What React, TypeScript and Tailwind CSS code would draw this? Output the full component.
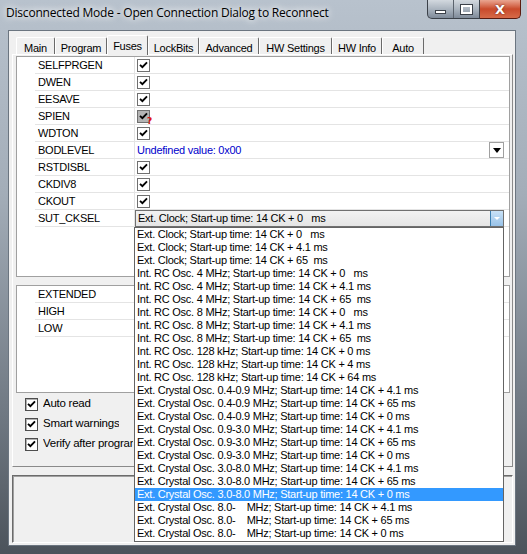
import React from "react"

const UI = "font-['Liberation_Sans',Arial,sans-serif] text-[11px] tracking-[-0.25px] text-black"

type Fuse = { name: string; kind: "check" | "grey" | "bod" | "combo" }

const fuses: Fuse[] = [
  { name: "SELFPRGEN", kind: "check" },
  { name: "DWEN", kind: "check" },
  { name: "EESAVE", kind: "check" },
  { name: "SPIEN", kind: "grey" },
  { name: "WDTON", kind: "check" },
  { name: "BODLEVEL", kind: "bod" },
  { name: "RSTDISBL", kind: "check" },
  { name: "CKDIV8", kind: "check" },
  { name: "CKOUT", kind: "check" },
  { name: "SUT_CKSEL", kind: "combo" },
]

const options = [
  "Ext. Clock; Start-up time: 14 CK + 0   ms",
  "Ext. Clock; Start-up time: 14 CK + 4.1 ms",
  "Ext. Clock; Start-up time: 14 CK + 65  ms",
  "Int. RC Osc. 4 MHz; Start-up time: 14 CK + 0   ms",
  "Int. RC Osc. 4 MHz; Start-up time: 14 CK + 4.1 ms",
  "Int. RC Osc. 4 MHz; Start-up time: 14 CK + 65  ms",
  "Int. RC Osc. 8 MHz; Start-up time: 14 CK + 0   ms",
  "Int. RC Osc. 8 MHz; Start-up time: 14 CK + 4.1 ms",
  "Int. RC Osc. 8 MHz; Start-up time: 14 CK + 65  ms",
  "Int. RC Osc. 128 kHz; Start-up time: 14 CK + 0 ms",
  "Int. RC Osc. 128 kHz; Start-up time: 14 CK + 4 ms",
  "Int. RC Osc. 128 kHz; Start-up time: 14 CK + 64 ms",
  "Ext. Crystal Osc. 0.4-0.9 MHz; Start-up time: 14 CK + 4.1 ms",
  "Ext. Crystal Osc. 0.4-0.9 MHz; Start-up time: 14 CK + 65 ms",
  "Ext. Crystal Osc. 0.4-0.9 MHz; Start-up time: 14 CK + 0 ms",
  "Ext. Crystal Osc. 0.9-3.0 MHz; Start-up time: 14 CK + 4.1 ms",
  "Ext. Crystal Osc. 0.9-3.0 MHz; Start-up time: 14 CK + 65 ms",
  "Ext. Crystal Osc. 0.9-3.0 MHz; Start-up time: 14 CK + 0 ms",
  "Ext. Crystal Osc. 3.0-8.0 MHz; Start-up time: 14 CK + 4.1 ms",
  "Ext. Crystal Osc. 3.0-8.0 MHz; Start-up time: 14 CK + 65 ms",
  "Ext. Crystal Osc. 3.0-8.0 MHz; Start-up time: 14 CK + 0 ms",
  "Ext. Crystal Osc. 8.0-    MHz; Start-up time: 14 CK + 4.1 ms",
  "Ext. Crystal Osc. 8.0-    MHz; Start-up time: 14 CK + 65 ms",
  "Ext. Crystal Osc. 8.0-    MHz; Start-up time: 14 CK + 0 ms",
]
const SELECTED = 20

const tabs = [
  { label: "Main", w: "w-[39px]" },
  { label: "Program", w: "w-[52px]" },
  { label: "Fuses", w: "w-[41px]", active: true },
  { label: "LockBits", w: "w-[51px]" },
  { label: "Advanced", w: "w-[60px]" },
  { label: "HW Settings", w: "w-[73px]" },
  { label: "HW Info", w: "w-[50px]" },
  { label: "Auto", w: "w-[42px]" },
]

function Tick() {
  return (
    <svg width="9" height="8" viewBox="0 0 9 8">
      <path d="M1 3.8 L3.4 6.2 L8 1.4" fill="none" stroke="#000" strokeWidth="1.9" />
    </svg>
  )
}

function GridCheck({ grey }: { grey?: boolean }) {
  return (
    <div
      className={`relative ml-[2px] w-[13px] h-[13px] border border-[#6f6f6f] flex items-center justify-center ${
        grey ? "bg-[#b4b4b4]" : "bg-white"
      }`}
    >
      <Tick />
      {grey && (
        <span className="absolute right-[-3px] bottom-[-4px] text-[9px] leading-[9px] font-bold text-[#e01010] font-['DejaVu_Sans',sans-serif]">
          ?
        </span>
      )}
    </div>
  )
}

function DropButton() {
  return (
    <div className="w-[15px] h-[16px] border border-[#a0a0a0] bg-white flex items-center justify-center">
      <div className="w-0 h-0 border-x-[4px] border-x-transparent border-t-[5px] border-t-black" />
    </div>
  )
}

function Combo() {
  return (
    <div className="flex-1 h-[17px] mt-[1px] flex border border-[#707070] bg-gradient-to-b from-[#f2f2f2] to-[#e5e5e5]">
      <div className="flex-1 pl-[2px] leading-[15px] whitespace-pre">{options[0]}</div>
      <div className="w-[13px] border-l border-[#3c7fb1] bg-gradient-to-b from-[#c9e2f7] to-[#98c2e8] flex items-center justify-center">
        <div className="w-0 h-0 border-x-[3px] border-x-transparent border-t-[3px] border-t-white" />
      </div>
    </div>
  )
}

function FuseRow({ fuse }: { fuse: Fuse }) {
  let value: React.ReactNode = null
  if (fuse.kind === "check") value = <GridCheck />
  if (fuse.kind === "grey") value = <GridCheck grey />
  if (fuse.kind === "bod")
    value = (
      <>
        <span className="flex-1 pl-[2px] text-[#0000cc]">Undefined value: 0x00</span>
        <DropButton />
      </>
    )
  if (fuse.kind === "combo") value = <Combo />

  return (
    <div className="flex h-[17px]">
      <div className="w-[18px] shrink-0" />
      <div className="w-[99px] shrink-0 border-b border-[#e4e4e4] pl-[3px] flex items-center">{fuse.name}</div>
      <div className="flex-1 border-b border-l border-[#e4e4e4] flex items-center pr-[5px]">{value}</div>
    </div>
  )
}

function PlainRow({ name }: { name: string }) {
  return (
    <div className="flex h-[17px]">
      <div className="w-[18px] shrink-0" />
      <div className="w-[99px] shrink-0 border-b border-[#e4e4e4] pl-[3px] flex items-center">{name}</div>
      <div className="flex-1 border-b border-l border-[#e4e4e4]" />
    </div>
  )
}

function OptionCheck({ label }: { label: string }) {
  return (
    <div className="h-[20px] flex items-center gap-[5px]">
      <div className="w-[13px] h-[13px] shrink-0 border border-[#4d4d4d] bg-white shadow-[inset_1px_1px_0_#b0b0b0] flex items-center justify-center">
        <Tick />
      </div>
      <span className="whitespace-nowrap overflow-hidden">{label}</span>
    </div>
  )
}

function TitleBar() {
  return (
    <div className="h-[30px] flex justify-between items-start">
      <div className="pl-[6px] pt-[4px] text-[12px] text-black font-['Open_Sans','Noto_Sans',sans-serif] tracking-[-0.2px] [text-shadow:0_0_6px_#fff,0_0_10px_#fff]">
        Disconnected Mode - Open Connection Dialog to Reconnect
      </div>
      <div className="flex mr-[6px]">
        <div className="flex h-[19px] border border-[#3b4149] border-t-0 rounded-bl-[5px] overflow-hidden bg-gradient-to-b from-[#d3d9df] via-[#aab4bf] to-[#7f8b99]">
          <div className="w-[26px] flex items-center justify-center border-r border-[#5b636d]">
            <div className="w-[11px] h-[4px] mt-[5px] bg-white border border-[#3b4149]" />
          </div>
          <div className="w-[25px] flex items-center justify-center">
            <div className="w-[11px] h-[9px] border-2 border-white outline outline-1 outline-[#3b4149]" />
          </div>
        </div>
        <div className="w-[41px] h-[19px] border border-[#5a1b10] border-t-0 border-l-0 rounded-br-[5px] bg-gradient-to-b from-[#e9a591] via-[#c94a2b] to-[#d76a48] flex items-center justify-center">
          <span className="text-white font-bold text-[13px] leading-[13px] font-['DejaVu_Sans',sans-serif] [text-shadow:0_0_2px_#5a1b10]">
            X
          </span>
        </div>
      </div>
    </div>
  )
}

export default function App() {
  return (
    <div
      className={`relative w-[527px] h-[554px] overflow-hidden flex flex-col bg-[linear-gradient(180deg,#b8c2cd_0%,#a3adb8_35%,#6f7882_75%,#4c535b_100%)] ${UI}`}
    >
      <TitleBar />

      <div className="pl-[8px]">
        <div className="w-[508px] h-[516px] bg-[#f0f0f0] border border-[#6b7580] flex flex-col">
          {/* tab strip */}
          <div className="h-[23px] flex items-end pl-[7px]">
            {tabs.map((t) =>
              t.active ? (
                <div
                  key={t.label}
                  className={`${t.w} h-[20px] -mb-[1px] relative z-10 bg-[#f0f0f0] border-t border-l border-white border-r border-r-[#6a6a6a] rounded-t-[2px] flex justify-center pt-[2px]`}
                >
                  {t.label}
                </div>
              ) : (
                <div
                  key={t.label}
                  className={`${t.w} h-[17px] border-t border-l border-white border-r border-r-[#6a6a6a] rounded-t-[2px] flex justify-center pt-[2px]`}
                >
                  {t.label}
                </div>
              )
            )}
          </div>

          {/* tab page */}
          <div className="ml-[3px] w-[501px] h-[413px] border border-t-white border-l-white border-r-[#8a8a8a] border-b-[#8a8a8a] pl-[3px] pr-[2px] pt-[1px] flex flex-col">
            <div className="w-[494px] h-[221px] bg-white border border-[#a0a0a0]">
              {fuses.map((f) => (
                <FuseRow key={f.name} fuse={f} />
              ))}
            </div>
            <div className="mt-[8px] w-[494px] h-[108px] bg-white border border-[#a0a0a0]">
              <PlainRow name="EXTENDED" />
              <PlainRow name="HIGH" />
              <PlainRow name="LOW" />
            </div>
            <div className="mt-[1px] pl-[9px] w-[117px] flex flex-col text-[11.5px]">
              <OptionCheck label="Auto read" />
              <OptionCheck label="Smart warnings" />
              <OptionCheck label="Verify after programming" />
            </div>
          </div>

          {/* log box */}
          <div className="mt-[8px] ml-[3px] w-[501px] h-[68px] border border-t-[#6b6b6b] border-l-[#6b6b6b] border-r-white border-b-white shadow-[inset_1px_1px_0_#a0a0a0] bg-[#f0f0f0]" />
        </div>
      </div>

      {/* open drop-down list of SUT_CKSEL */}
      <div className="absolute left-[134px] top-[227px] w-[370px] h-[315px] bg-white border border-[#646464] z-20">
        {options.map((o, i) => (
          <div
            key={i}
            className={`h-[13px] leading-[13px] pl-[2px] whitespace-pre ${
              i === SELECTED ? "bg-[#3399ff] text-white" : ""
            }`}
          >
            {o}
          </div>
        ))}
      </div>
    </div>
  )
}
